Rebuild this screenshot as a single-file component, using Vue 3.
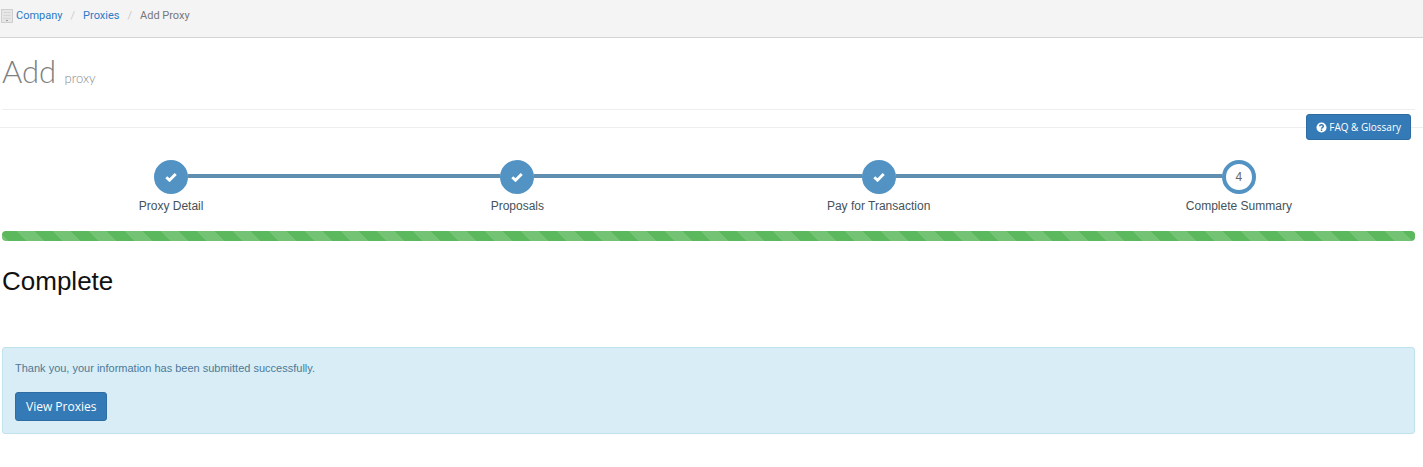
<script setup>
const steps = [
  { number: 1, label: 'Proxy Detail', done: true },
  { number: 2, label: 'Proposals', done: true },
  { number: 3, label: 'Pay for Transaction', done: true },
  { number: 4, label: 'Complete Summary', done: false },
]
</script>

<template>
  <div class="page">
    <nav class="breadcrumbs" aria-label="Breadcrumb">
      <svg class="building" viewBox="0 0 12 14" aria-hidden="true">
        <rect x="0.5" y="0.5" width="11" height="13" fill="#e6e6e6" stroke="#cfcfcf" />
        <path d="M2.5 3.500h7M2.500 6.500h7M2.500 9.500h7" stroke="#d6d6d6" />
        <rect x="5" y="11" width="2" height="1" fill="#999" />
      </svg>
      <ol>
        <li><a href="#company">Company</a></li>
        <li><a href="#proxies">Proxies</a></li>
        <li aria-current="page">Add Proxy</li>
      </ol>
    </nav>

    <main>
      <header class="title">
        <h1>Add <small>proxy</small></h1>
      </header>

      <div class="toolbar">
        <button type="button" class="btn btn-small">
          <svg class="help" viewBox="0 0 12 12" aria-hidden="true">
            <circle cx="6" cy="6" r="5.500" fill="#fff" />
            <path d="M4 4.700C4 2.500 8 2.500 8 4.600C8 5.900 6 5.800 6 7.300" fill="none" stroke="#337ab7" stroke-width="1.600" />
            <rect x="5.200" y="8.200" width="1.600" height="1.600" fill="#337ab7" />
          </svg>
          FAQ &amp; Glossary
        </button>
      </div>

      <ol class="steps">
        <li v-for="step in steps" :key="step.number" :class="{ done: step.done }">
          <span class="marker">
            <svg v-if="step.done" viewBox="0 0 12 10" aria-label="Done">
              <path d="M1.300 5.200L4.500 8.200L10.700 1.900" fill="none" stroke="#fff" stroke-width="2.900" />
            </svg>
            <template v-else>{{ step.number }}</template>
          </span>
          <span class="label">{{ step.label }}</span>
        </li>
      </ol>

      <div class="progress" role="progressbar" aria-label="Progress" aria-valuenow="100" aria-valuemin="0" aria-valuemax="100"></div>

      <h2>Complete</h2>

      <section class="notice">
        <p>Thank you, your information has been submitted successfully.</p>
        <button type="button" class="btn">View Proxies</button>
      </section>
    </main>
  </div>
</template>

<style>
body {
  margin: 0;
  background: #fff;
}
</style>

<style scoped>
.page {
  font-family: "Liberation Sans", Arial, sans-serif;
  color: #393939;
}
ol {
  list-style: none;
  margin: 0;
  padding: 0;
}
.breadcrumbs {
  display: flex;
  align-items: center;
  gap: 3px;
  box-sizing: border-box;
  height: 38px;
  padding: 0 1px 6px;
  background: #f4f4f4;
  border-bottom: 1px solid #d4d4d4;
  font-family: Roboto, sans-serif;
  font-size: 11px;
  line-height: 16px;
  color: #777;
}
.building {
  width: 12px;
  height: 14px;
}
.breadcrumbs ol {
  display: flex;
}
.breadcrumbs li + li::before {
  content: "/";
  padding: 0 8px;
  color: #ccc;
}
.breadcrumbs a {
  color: #2a7ac8;
  text-decoration: none;
}
main {
  padding: 0 8px 0 2px;
}
.title {
  box-sizing: border-box;
  height: 72px;
  padding-top: 13px;
  border-bottom: 1px solid #eee;
}
h1 {
  margin: 0;
  font-family: Lato, sans-serif;
  font-size: 31px;
  font-weight: 300;
  line-height: 40px;
  color: #808080;
}
h1 small {
  font-size: 13px;
  font-weight: 300;
  color: #888;
}
.toolbar {
  display: flex;
  justify-content: flex-end;
  margin: 0 -8px 0 -2px;
  padding: 4px 12px 0 0;
  background: linear-gradient(#eee, #eee) 0 17px / 100% 1px no-repeat;
}
.btn {
  display: inline-flex;
  align-items: center;
  gap: 3px;
  box-sizing: border-box;
  height: 29px;
  padding: 0 10px;
  border: 1px solid #2e6da4;
  border-radius: 3px;
  background: #337ab7;
  color: #fff;
  font-family: "Open Sans", sans-serif;
  font-size: 12px;
  line-height: 18px;
  white-space: nowrap;
}
.btn-small {
  height: 26px;
  padding: 0 9px;
  gap: 2px;
  font-size: 10px;
}
.help {
  width: 11px;
  height: 11px;
}
.steps {
  display: grid;
  grid-template-columns: 338fr 354fr 368fr 352fr;
  margin-top: 20px;
}
.steps li {
  display: grid;
  grid-template-columns: 1fr 34px 1fr;
  align-items: center;
}
.steps li::before,
.steps li::after {
  content: "";
  height: 4px;
  margin-bottom: 2px;
  background: #5f8eb1;
}
.steps li::before {
  grid-area: 1 / 1;
}
.steps li::after {
  grid-area: 1 / 3;
}
.steps li:first-child::before,
.steps li:last-child::after {
  background: none;
}
.marker {
  grid-area: 1 / 2;
  display: flex;
  align-items: center;
  justify-content: center;
  box-sizing: border-box;
  width: 34px;
  height: 34px;
  border: 4px solid #5293c4;
  border-radius: 50%;
  background: #fff;
  font-size: 12px;
  color: #666;
}
.done .marker {
  background: #5293c4;
}
.marker svg {
  width: 12px;
  height: 10px;
}
.label {
  grid-area: 2 / 1 / 3 / 4;
  text-align: center;
  font-size: 12px;
  line-height: 18px;
  margin-top: 3px;
  color: #44525a;
}
.progress {
  height: 10px;
  margin-top: 16px;
  border-radius: 4px;
  background: #5cb85c linear-gradient(45deg, #74c374 25%, transparent 25%, transparent 50%, #74c374 50%, #74c374 75%, transparent 75%) 14px 0 / 36px 36px;
}
h2 {
  margin: 24px 0 50px;
  font-size: 26px;
  font-weight: 400;
  line-height: 32px;
  color: #111;
}
.notice {
  padding: 12px;
  border: 1px solid #c0e2ec;
  border-radius: 3px;
  background: #d9edf7;
}
.notice p {
  margin: 0 0 15px;
  font-size: 11px;
  line-height: 17px;
  color: #4c7a96;
}
</style>
